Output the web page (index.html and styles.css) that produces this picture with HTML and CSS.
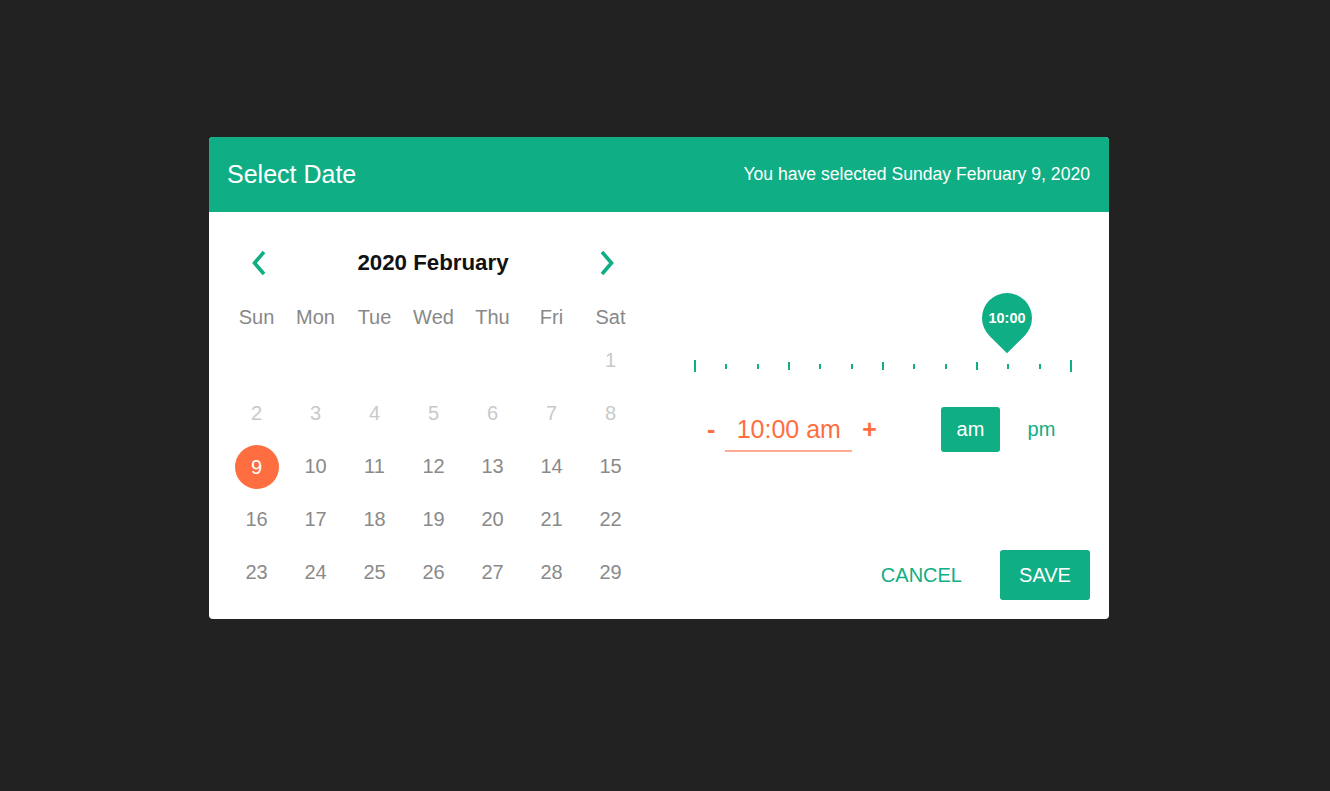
FILE: index.html
```html
<!DOCTYPE html>
<html>
<head>
<meta charset="utf-8">
<link rel="stylesheet" href="styles.css">
</head>
<body>
<div class="dialog">
  <div class="header">
    <div class="title">Select Date</div>
    <div class="selected">You have selected Sunday February 9, 2020</div>
  </div>
  <div class="content">
    <div class="calendar">
      <div class="nav">
        <svg class="chev" width="16" height="28" viewBox="0 0 16 28"><path d="M13 3 L3.5 14 L13 25" fill="none" stroke="#0fae84" stroke-width="3.6"/></svg>
        <div class="month">2020 February</div>
        <svg class="chev" width="16" height="28" viewBox="0 0 16 28"><path d="M3 3 L12.5 14 L3 25" fill="none" stroke="#0fae84" stroke-width="3.6"/></svg>
      </div>
      <div class="weekdays">
        <div>Sun</div><div>Mon</div><div>Tue</div><div>Wed</div><div>Thu</div><div>Fri</div><div>Sat</div>
      </div>
      <div class="days">
        <div></div><div></div><div></div><div></div><div></div><div></div><div class="off">1</div>
        <div class="off">2</div><div class="off">3</div><div class="off">4</div><div class="off">5</div><div class="off">6</div><div class="off">7</div><div class="off">8</div>
        <div><span class="sel">9</span></div><div>10</div><div>11</div><div>12</div><div>13</div><div>14</div><div>15</div>
        <div>16</div><div>17</div><div>18</div><div>19</div><div>20</div><div>21</div><div>22</div>
        <div>23</div><div>24</div><div>25</div><div>26</div><div>27</div><div>28</div><div>29</div>
      </div>
    </div>
    <div class="timepanel">
      <div class="track">
        <span class="tick long"></span><span class="tick"></span><span class="tick"></span><span class="tick mid"></span><span class="tick"></span><span class="tick"></span><span class="tick mid"></span><span class="tick"></span><span class="tick"></span><span class="tick mid"></span><span class="tick"></span><span class="tick"></span><span class="tick long"></span>
        <div class="pin" style="left: 83.333%"><div class="drop"></div><span class="pintext">10:00</span></div>
      </div>
      <div class="timerow">
        <span class="step minus">-</span>
        <div class="timebox">10:00 am</div>
        <span class="step plus">+</span>
        <div class="ampm">
          <button class="period active">am</button>
          <button class="period">pm</button>
        </div>
      </div>
      <div class="actions">
        <button class="cancel">CANCEL</button>
        <button class="save">SAVE</button>
      </div>
    </div>
  </div>
</div>
</body>
</html>
```
FILE: styles.css
```css
* { box-sizing: border-box; }
html, body { margin: 0; padding: 0; }
body {
  background: #222222;
  width: 1330px;
  height: 791px;
  font-family: "Liberation Sans", Arial, sans-serif;
  overflow: hidden;
}
.dialog {
  margin: 137px 0 0 209px;
  width: 900px;
  height: 482px;
  background: #ffffff;
  border-radius: 4px;
  overflow: hidden;
  display: flex;
  flex-direction: column;
}
.header {
  height: 75px;
  background: #0fae84;
  color: #ffffff;
  display: flex;
  align-items: center;
  justify-content: space-between;
  padding: 0 19px 0 18px;
}
.title { font-size: 25px; }
.selected { font-size: 17.6px; }
.content {
  flex: 1;
  display: flex;
}
.calendar {
  width: 413px;
  margin-left: 18px;
  padding-top: 31px;
}
.nav {
  height: 40px;
  display: flex;
  align-items: center;
  padding: 0 25px 0 24px;
}
.chev { display: block; }
.month {
  flex: 1;
  text-align: center;
  font-weight: bold;
  font-size: 22.3px;
  color: #111;
}
.weekdays {
  margin-top: 17px;
  height: 34px;
  display: grid;
  grid-template-columns: repeat(7, 59px);
  color: #888888;
  font-size: 20px;
}
.weekdays div, .days div {
  display: flex;
  align-items: center;
  justify-content: center;
}
.days {
  display: grid;
  grid-template-columns: repeat(7, 59px);
  grid-auto-rows: 53px;
  color: #8a8a8a;
  font-size: 20px;
}
.days .off { color: #c9c9c9; }
.sel {
  width: 44px;
  height: 44px;
  border-radius: 50%;
  background: #ff6e40;
  color: #ffffff;
  display: flex;
  align-items: center;
  justify-content: center;
  margin-top: 1px;
}
.timepanel {
  flex: 1;
  display: flex;
  flex-direction: column;
  padding: 148px 19px 19px 0;
}
.track {
  position: relative;
  margin-left: 54px;
  width: 378px;
  height: 12px;
  display: flex;
  justify-content: space-between;
  align-items: center;
}
.tick {
  width: 2px;
  height: 5px;
  background: #0fae84;
}
.tick.mid { height: 8px; }
.tick.long { height: 12px; }
.pin {
  position: absolute;
  top: -67px;
  width: 50px;
  height: 60px;
  margin-left: -27px;
}
.drop {
  position: absolute;
  left: 0;
  top: 0;
  width: 50px;
  height: 50px;
  background: #0fae84;
  border-radius: 50% 50% 0 50%;
  transform: rotate(45deg);
}
.pintext {
  position: absolute;
  left: 0;
  top: 0;
  width: 50px;
  height: 50px;
  line-height: 50px;
  text-align: center;
  color: #ffffff;
  font-size: 14.4px;
  font-weight: bold;
}
.timerow {
  margin-top: 35px;
  height: 45px;
  display: flex;
  align-items: center;
}
.step {
  color: #ff6e40;
  font-size: 25px;
  font-weight: bold;
}
.minus { margin-left: 67px; }
.timebox {
  margin-left: 10px;
  width: 127px;
  height: 45px;
  line-height: 44px;
  text-align: center;
  color: #ff6e40;
  font-size: 25px;
  border-bottom: 2px solid #ffab91;
}
.plus { margin-left: 10px; }
.ampm {
  margin-left: auto;
  display: flex;
  gap: 12px;
  margin-right: 19px;
}
.period {
  width: 59px;
  height: 45px;
  border: none;
  border-radius: 3px;
  background: transparent;
  color: #0fae84;
  font-family: "Liberation Sans", Arial, sans-serif;
  font-size: 20px;
  padding: 0;
}
.period.active {
  background: #0fae84;
  color: #ffffff;
}
.actions {
  margin-top: auto;
  display: flex;
  justify-content: flex-end;
  align-items: center;
}
.cancel {
  height: 50px;
  padding: 0 19px;
  border: none;
  background: transparent;
  color: #0fae84;
  font-family: "Liberation Sans", Arial, sans-serif;
  font-size: 20px;
}
.save {
  margin-left: 19px;
  width: 90px;
  height: 50px;
  border: none;
  border-radius: 3px;
  background: #0fae84;
  color: #ffffff;
  font-family: "Liberation Sans", Arial, sans-serif;
  font-size: 20px;
  padding: 0;
}
```
